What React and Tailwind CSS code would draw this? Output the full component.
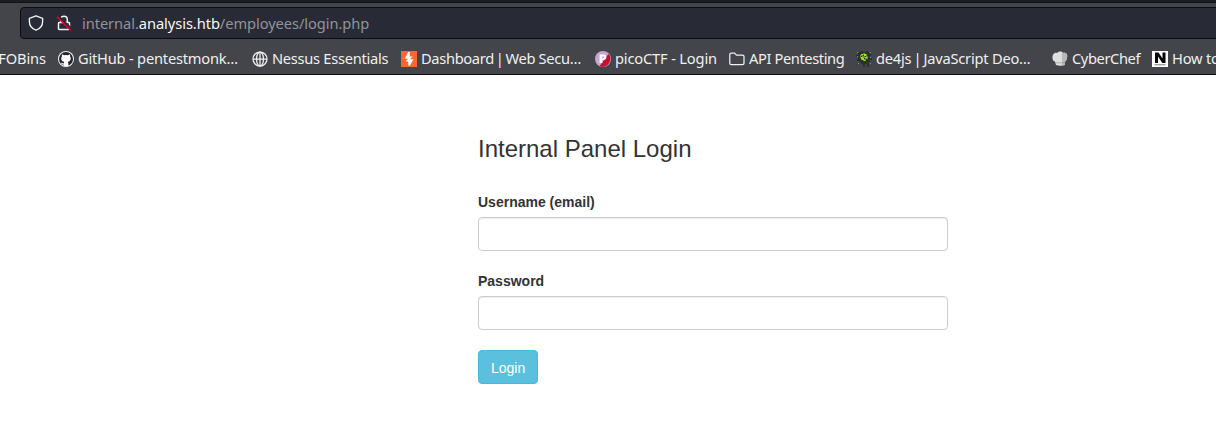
import React from "react";

const Github = () => (
  <svg width="16" height="16" viewBox="0 0 16 16">
    <circle cx="8" cy="8" r="8" fill="#f2f2f2" />
    <circle cx="8" cy="8" r="7" fill="#20252b" />
    <path fill="#fff" d="M4 3.2 6.1 4.2Q8 3.7 9.9 4.2L12 3.2Q12.4 4.4 12 5.3C13.8 8 12.3 10.5 9.7 10.9Q10.4 11.5 10.4 12.5V15Q8 15.7 5.6 15V13.5C3.8 13.8 3.6 12.5 2.8 11.9C4 11.6 4.1 12.8 5.6 12.5Q5.7 11.4 6.3 10.9C3.7 10.5 2.2 8 4 5.3Q3.6 4.4 4 3.2Z" />
  </svg>
);
const Globe = () => (
  <svg width="16" height="16" viewBox="0 0 16 16" fill="none" stroke="#f0f0f2" strokeWidth="1.25">
    <circle cx="8" cy="8" r="7" />
    <ellipse cx="8" cy="8" rx="3.5" ry="7" />
    <path d="M1 8H15M8 1V15" />
  </svg>
);
const Burp = () => (
  <svg width="16" height="16" viewBox="0 0 16 16">
    <path fill="#ff6633" d="M0 0H16V16H0Z" />
    <path fill="#fff" d="M8.8 1V5.4H11.6L8.9 8.3H12.5L9 14.5H7.3V10.6H4.5L7.2 7.7H3.7L7.2 1Z" />
  </svg>
);
const Pico = () => (
  <svg width="16" height="16" viewBox="0 0 16 16">
    <circle cx="8" cy="8" r="8" fill="#c6a5d0" />
    <path fill="#c8102e" d="M13.6 2.8A8 8 0 0 1 4.5 15.2Z" />
    <path fill="#fff" fillRule="evenodd" d="M4.6 3.5H8.5C12.3 3.5 12.3 9 8.5 9H7.4V12H4.6ZM7.2 5.3V7.2H8.2C9.4 7.2 9.4 5.3 8.2 5.3Z" />
  </svg>
);
const Folder = () => (
  <svg width="16" height="16" viewBox="0 0 16 16" fill="none" stroke="#f0f0f2" strokeWidth="1.25" strokeLinejoin="round">
    <path d="M2.3 2.1H5.6L7.4 4.1H13.5Q15 4.1 15 5.5V12.2Q15 13.6 13.5 13.6H2.2Q.8 13.6.8 12.2V3.5Q.8 2.1 2.3 2.1Z" />
  </svg>
);
const Tree = () => (
  <svg width="16" height="16" viewBox="0 0 16 16" shapeRendering="crispEdges">
    <path fill="#2b3031" d="M3 1H5V0H7V1H10V0H12V1H13V3H15V5H14V7H16V9H14V11H12V12H13V16H11V13H9V16H7V13H5V11H3V10H1V8H2V6H0V4H2V2H3Z" />
    <path fill="#6f9a24" d="M4 4H5V3H7V2H9V3H11V5H12V8H10V10H7V9H5V7H4Z" />
    <path fill="#a9dc32" d="M5 3H7V4H5ZM8 3H10V5H8ZM5 6H7V7H8V9H6V8H5ZM9 6H11V7H9ZM8 9H9V10H8Z" />
    <path fill="#25292b" d="M7 4H8V5H7ZM9 5H10V6H9ZM5 5H6V6H5ZM8 7H9V8H8Z" />
    <path fill="#7daa2d" d="M1 1H2V2H1ZM14 1H15V2H14ZM1 5H2V6H1ZM14 6H15V7H14ZM2 12H3V13H2ZM14 12H15V13H14Z" />
  </svg>
);
const Chef = () => (
  <svg width="16" height="16" viewBox="0 0 16 16">
    <path fill="#dedede" d="M3 10.5C0 10 0 5 1.2 3.4C2 1.8 4 1.3 5.2 2C7 0 10 .2 11 2C14 1.2 16 3.7 15 6.7C14.6 9 13.8 10.2 13 10.5V14Q8 15.5 4 14Z" />
    <path fill="#b8b8b8" d="M10 1.4 11 2C14 1.2 16 3.7 15 6.7C14.6 9 13.8 10.2 13 10.5V14L10 14.6Z" />
    <path fill="#969696" d="M4 11.5H13V12.2H4Z" />
  </svg>
);
const NIcon = () => (
  <svg width="16" height="16" viewBox="0 0 16 16">
    <path fill="#fff" d="M0 0H16V16H0Z" />
    <path fill="#050505" d="M3 1.5H6.5L10.5 7.5V1.5H13.5V12H10.3L6 5.6V12H3Z" />
    <path fill="#777" d="M2.5 13.3H13.5V14.3H2.5Z" />
  </svg>
);

const Pipe = () => <span className="-mx-[1.5px]">|</span>;

const bookmarks = [
  { icon: Github, label: "GitHub - pentestmonk…", cls: "w-[194px] tracking-[-0.21px]" },
  { icon: Globe, label: "Nessus Essentials", cls: "w-[149px] tracking-[-0.28px]" },
  { icon: Burp, label: <>Dashboard <Pipe /> Web Secu…</>, cls: "w-[194px] tracking-[-0.34px]" },
  { icon: Pico, label: "picoCTF - Login", cls: "w-[134px] tracking-[-0.17px]" },
  { icon: Folder, label: "API Pentesting", cls: "w-[127px] tracking-[-0.4px]" },
  { icon: Tree, label: <>de4js <Pipe /> JavaScript Deo…</>, cls: "w-[196px] tracking-[-0.22px]" },
  { icon: Chef, label: "CyberChef", cls: "w-[100px] tracking-[-0.4px]" },
  { icon: NIcon, label: "How to", cls: "w-[80px] tracking-[-0.2px]" },
];

export default function App() {
  return (
    <div className="h-[432px] w-full overflow-hidden bg-white">
      <header className="h-[75px] overflow-hidden border-b border-[#0c0c0f] bg-[#43454b] font-['Noto_Sans',sans-serif]">
        <div className="h-[3px] border-b border-[#111214] bg-[#1c1d22]" />
        <div className="mt-1 -mr-2 ml-5 flex h-8 items-center rounded-[4px] border border-[#0c0c0f] bg-[#282a36] pl-[7px]">
          <svg width="16" height="16" viewBox="0 0 16 16" fill="none" stroke="#f0f0f2" strokeWidth="1.4" strokeLinejoin="round">
            <path d="M8 .8 14.6 3.3V6.5C14.6 10.6 12 13.8 8 15.2C4 13.8 1.4 10.6 1.4 6.5V3.3Z" />
          </svg>
          <svg className="ml-3" width="16" height="16" viewBox="0 0 16 16" fill="none">
            <path stroke="#f0f0f2" strokeWidth="1.5" d="M4.7 7.5V4.5A3.3 3.3 0 0 1 11.3 4.5V7.5M3.2 7.5H12.8Q13.5 7.5 13.5 8.2V13.8Q13.5 14.5 12.8 14.5H3.2Q2.5 14.5 2.5 13.8V8.2Q2.5 7.5 3.2 7.5Z" />
            <path stroke="#282a36" strokeWidth="2.4" d="M1.8 .6 15.3 14.1" />
            <path stroke="#e2002f" strokeWidth="1.5" d="M1 1.7 14.7 15.4" />
          </svg>
          <span className="ml-[10px] text-[14.67px] leading-5 tracking-[-0.07px] whitespace-nowrap text-[#929399]">
            internal.<span className="text-[#f8f8f2]">analysis.htb</span>/employees/login.php
          </span>
        </div>
        <nav className="flex h-[39px] items-center text-[14.67px] leading-5 whitespace-nowrap text-[#f0f0ee]">
          <div className="-mt-px flex w-[58px] shrink-0 justify-end pr-3 tracking-[-0.1px]">FOBins</div>
          {bookmarks.map(({ icon: Icon, label, cls }, i) => (
            <div key={i} className={`flex shrink-0 items-center gap-1 ${cls}`}>
              <Icon />
              <span className="-mt-0.5">{label}</span>
            </div>
          ))}
        </nav>
      </header>
      <main className="ml-[478px] w-[470px] pt-[61px] font-['Liberation_Sans',Arial,sans-serif] text-sm leading-5 text-[#333]">
        <h3 className="text-2xl leading-[26px]">Internal Panel Login</h3>
        <form className="mt-[30px]" onSubmit={(e) => e.preventDefault()}>
          <label htmlFor="username" className="block font-bold">Username (email)</label>
          <input id="username" className="mt-[5px] block h-[34px] w-full rounded border border-[#ccc] bg-white px-3 shadow-[inset_0_1px_1px_rgba(0,0,0,0.075)]" />
          <label htmlFor="password" className="mt-5 block font-bold">Password</label>
          <input id="password" type="password" className="mt-[5px] block h-[34px] w-full rounded border border-[#ccc] bg-white px-3 shadow-[inset_0_1px_1px_rgba(0,0,0,0.075)]" />
          <button className="mt-5 h-[34px] rounded border border-[#46b8da] bg-[#5bc0de] px-3 pt-0.5 text-white">Login</button>
        </form>
      </main>
    </div>
  );
}
